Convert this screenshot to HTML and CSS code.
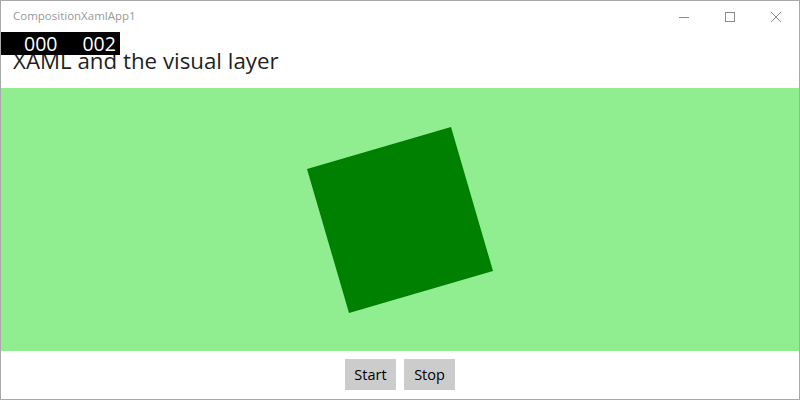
FILE: index.html
```html
<!DOCTYPE html>
<html>
<head>
<meta charset="utf-8">
<link rel="stylesheet" href="styles.css">
</head>
<body>
<div class="window">
  <div class="titlebar">
    <span class="title">CompositionXamlApp1</span>
    <div class="controls">
      <span class="ctl"><svg width="12" height="12" viewBox="0 0 12 12"><line x1="1" y1="6.5" x2="11" y2="6.5" stroke="#8a8a8a" stroke-width="1"/></svg></span>
      <span class="ctl"><svg width="12" height="12" viewBox="0 0 12 12"><rect x="1.5" y="1.5" width="9" height="9" fill="none" stroke="#8a8a8a" stroke-width="1"/></svg></span>
      <span class="ctl"><svg width="12" height="12" viewBox="0 0 12 12"><path d="M1 1 L11 11 M11 1 L1 11" stroke="#8a8a8a" stroke-width="1"/></svg></span>
    </div>
  </div>
  <div class="page">
    <div class="header">
      <h1 class="heading">XAML and the visual layer</h1>
    </div>
    <div class="stage">
      <div class="square"></div>
    </div>
    <div class="actions">
      <button class="btn">Start</button>
      <button class="btn">Stop</button>
    </div>
  </div>
  <div class="counter"><span>000</span><span>002</span></div>
</div>
</body>
</html>
```

FILE: styles.css
```css
html, body {
  margin: 0;
  padding: 0;
  background: #fff;
}
.window {
  position: relative;
  width: 800px;
  height: 400px;
  box-sizing: border-box;
  border: 1px solid #a9a9a9;
  display: flex;
  flex-direction: column;
  font-family: "Open Sans", "Noto Sans", sans-serif;
  overflow: hidden;
}
.titlebar {
  height: 31px;
  flex: none;
  display: flex;
  align-items: center;
  justify-content: space-between;
}
.title {
  padding-left: 12px;
  font-size: 11.5px;
  color: #999;
  margin-top: -2px;
}
.controls {
  display: flex;
  height: 100%;
}
.ctl {
  width: 46px;
  display: flex;
  align-items: center;
  justify-content: center;
}
.page {
  flex: 1;
  display: flex;
  flex-direction: column;
}
.header {
  height: 56px;
  flex: none;
}
.heading {
  margin: 0;
  padding: 15px 0 0 12px;
  font-size: 22.3px;
  font-weight: 400;
  line-height: 28px;
  color: #1f1f1f;
}
.stage {
  height: 263px;
  flex: none;
  background: #90ee90;
  display: flex;
  align-items: center;
  justify-content: center;
}
.square {
  width: 150px;
  height: 150px;
  background: #008000;
  transform: rotate(-16.26deg);
}
.actions {
  flex: 1;
  display: flex;
  justify-content: center;
  gap: 8px;
  padding-top: 8px;
}
.btn {
  height: 31px;
  width: 51px;
  border: none;
  background: #cccccc;
  font-family: "Open Sans", "Noto Sans", sans-serif;
  font-size: 14.5px;
  color: #000;
  padding: 0;
}
.counter {
  position: absolute;
  left: 0;
  top: 31px;
  width: 119px;
  height: 23px;
  background: #000;
  color: #fff;
  font-size: 19.5px;
  line-height: 23px;
  display: flex;
  gap: 25px;
  padding-left: 23px;
  box-sizing: border-box;
}
```
